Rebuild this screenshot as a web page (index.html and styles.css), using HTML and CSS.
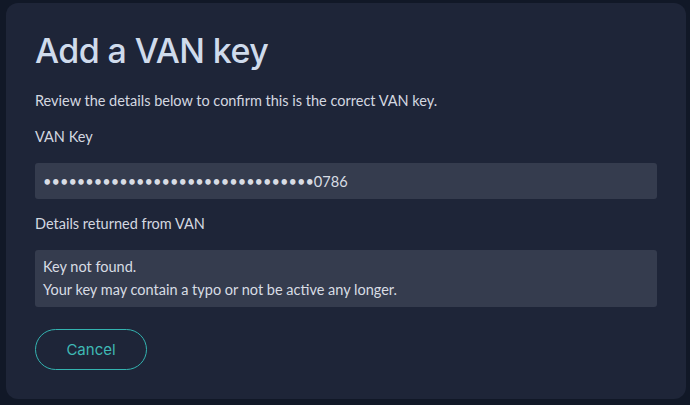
FILE: index.html
```html
<!DOCTYPE html>
<html lang="en">
<head>
<meta charset="utf-8">
<title>Add a VAN key</title>
<link rel="stylesheet" href="styles.css">
</head>
<body>
<div class="card">
  <h1 class="title">Add a VAN key</h1>
  <p class="intro">Review the details below to confirm this is the correct VAN key.</p>
  <div class="label">VAN Key</div>
  <div class="field">••••••••••••••••••••••••••••••••0786</div>
  <div class="label label-details">Details returned from VAN</div>
  <div class="details">
    <div>Key not found.</div>
    <div>Your key may contain a typo or not be active any longer.</div>
  </div>
  <div class="actions">
    <button class="btn-cancel" type="button">Cancel</button>
  </div>
</div>
</body>
</html>
```
FILE: styles.css
```css
html, body {
  margin: 0;
  padding: 0;
  background: #111827;
  width: 690px;
  height: 405px;
  overflow: hidden;
}
body {
  padding: 3px 4px 6px 6px;
  box-sizing: border-box;
  font-family: "Lato", "Noto Sans", sans-serif;
  color: #d4d8e0;
}
.card {
  background: #1e2538;
  border-radius: 12px;
  height: 396px;
  box-sizing: border-box;
  padding: 28px 29px 0 29px;
  display: flex;
  flex-direction: column;
  align-items: stretch;
}
.title {
  margin: 0;
  font-family: "Inter", "Open Sans", sans-serif;
  font-weight: 500;
  font-size: 34px;
  line-height: 40px;
  color: #cfdbec;
  letter-spacing: -0.6px;
}
.intro {
  margin: 20px 0 0 0;
  font-size: 14.5px;
  line-height: 20px;
}
.label {
  margin-top: 16px;
  font-size: 14.5px;
  line-height: 20px;
}
.label-details {
  margin-top: 15px;
}
.field {
  margin-top: 16px;
  height: 36px;
  background: #353c4e;
  border-radius: 3px;
  padding: 0 8px;
  display: flex;
  align-items: center;
  font-size: 14.6px;
  color: #d8dce4;
}
.details {
  margin-top: 16px;
  background: #353c4e;
  border-radius: 3px;
  padding: 5px 8px 6px 8px;
  font-size: 14.5px;
  line-height: 23px;
  color: #d8dce4;
}
.actions {
  margin-top: 22px;
  display: flex;
}
.btn-cancel {
  width: 112px;
  height: 41px;
  border: 1px solid #33b3b0;
  border-radius: 21px;
  background: transparent;
  color: #3fb9b5;
  font-family: "Inter", "Open Sans", sans-serif;
  font-size: 15px;
  font-weight: 400;
  padding: 0;
}
```
